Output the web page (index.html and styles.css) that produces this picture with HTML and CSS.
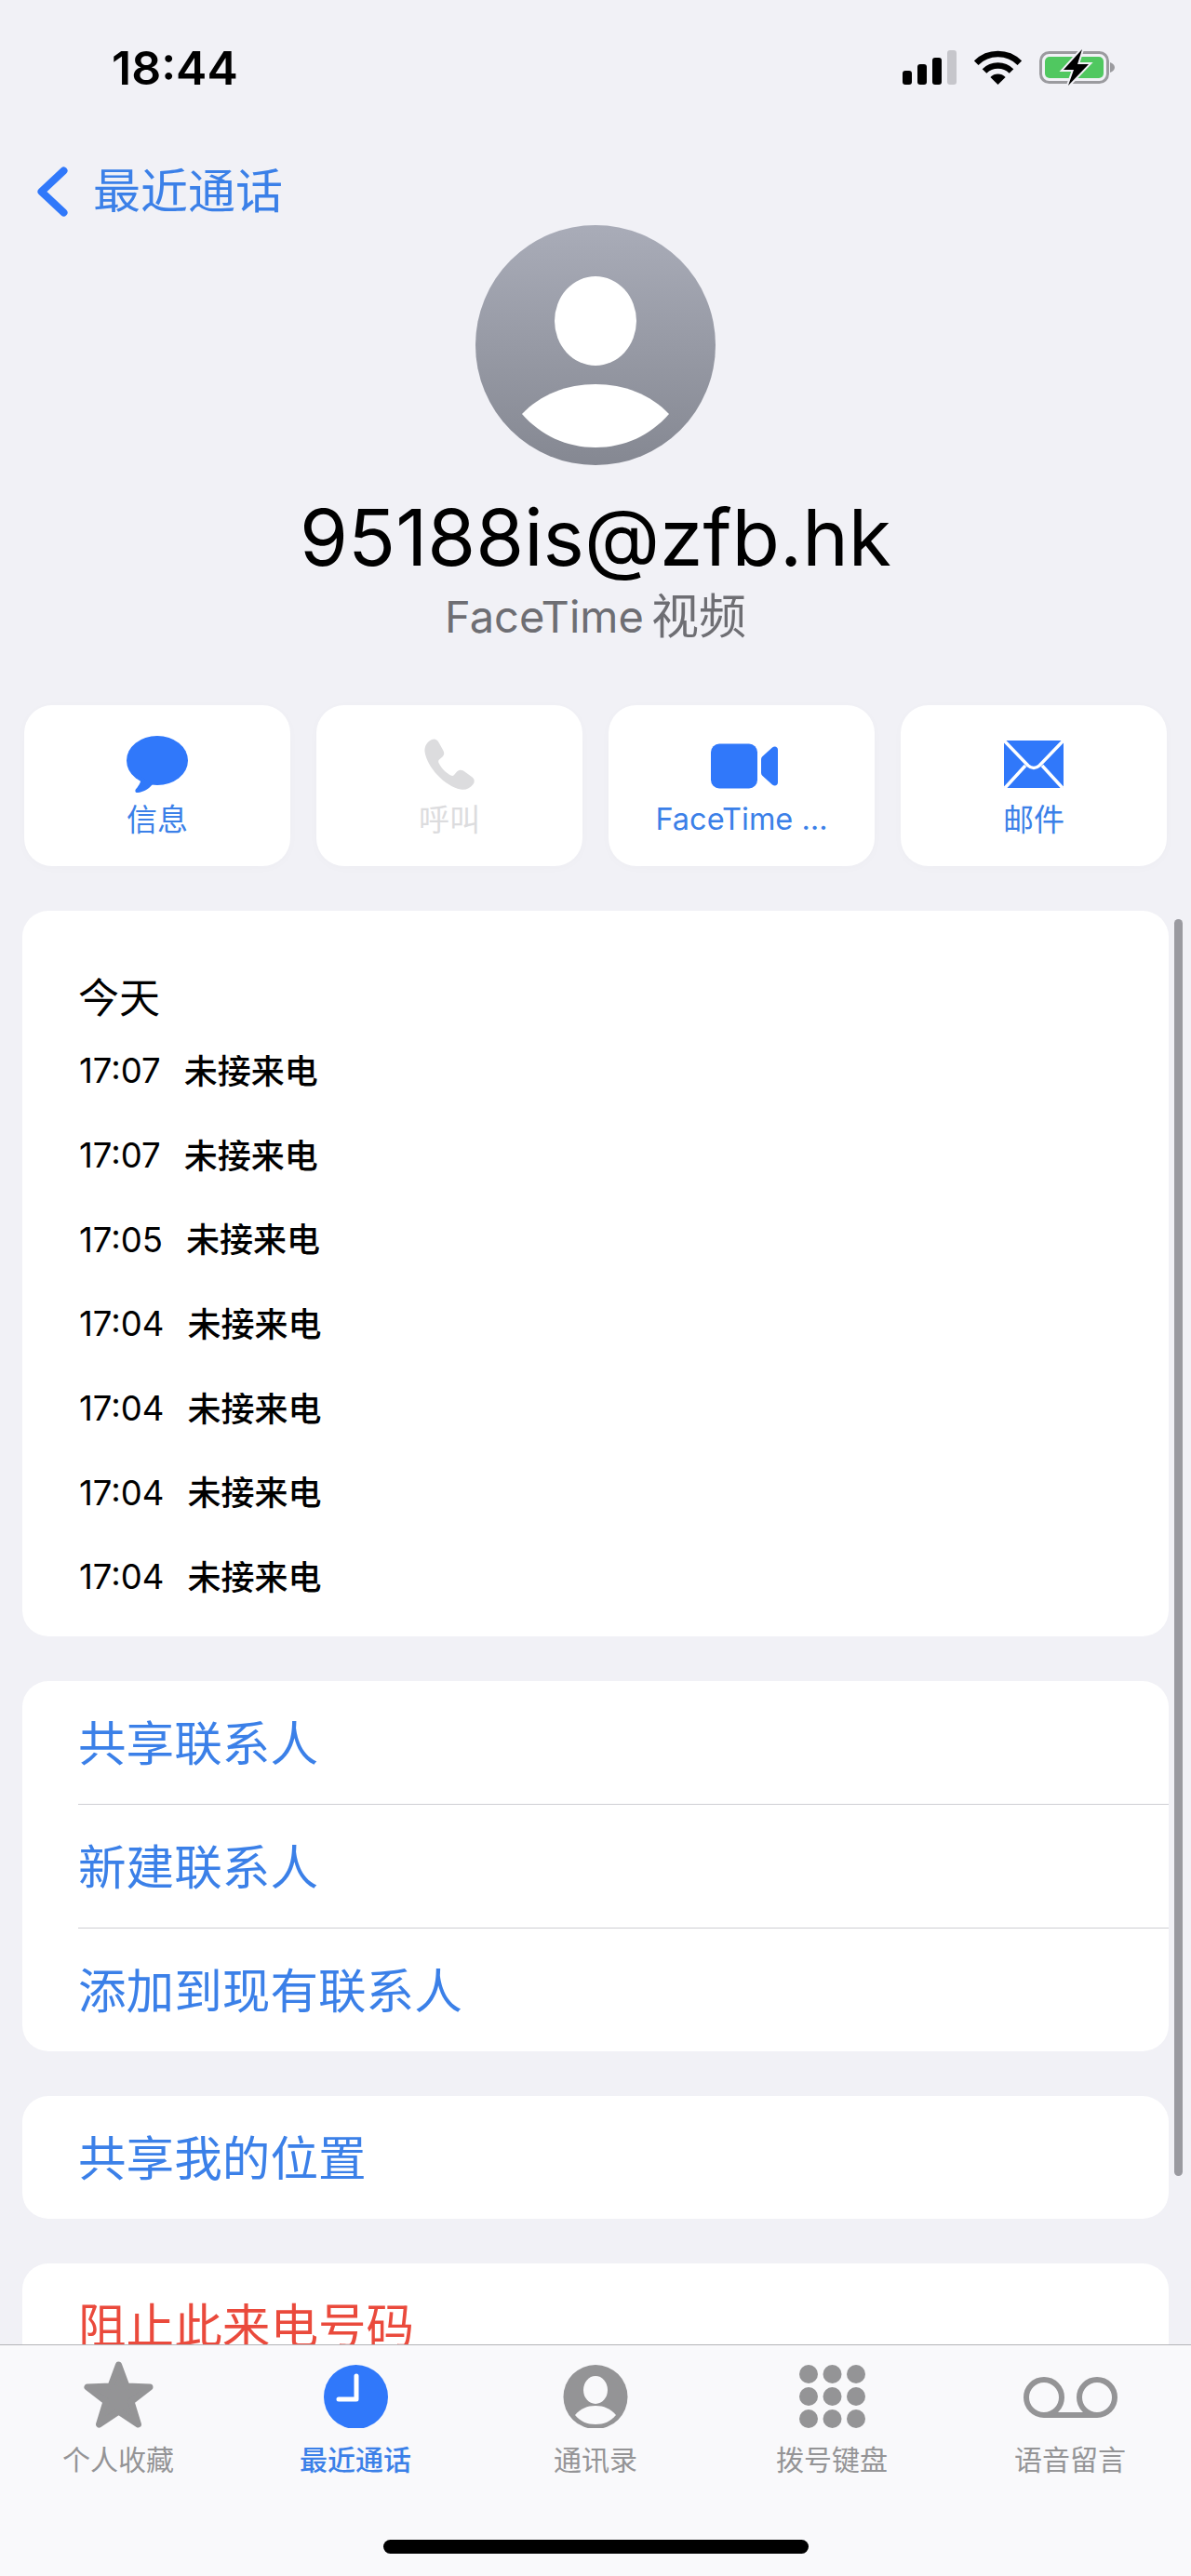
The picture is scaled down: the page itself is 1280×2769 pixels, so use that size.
FILE: index.html
```html
<!DOCTYPE html>
<html lang="zh-CN">
  <head>
    <meta charset="utf-8">
    <title>95188is@zfb.hk</title>
    <link rel="stylesheet" href="styles.css">
  </head>
  <body>
    <div class="screen">

      <div class="status">
        <span class="time">18:44</span>
        <div class="status-icons">
          <svg width="58" height="37" viewBox="0 0 58 37">
            <rect x="0" y="22" width="10" height="15" rx="3" fill="#000"/>
            <rect x="16" y="15" width="10" height="22" rx="3" fill="#000"/>
            <rect x="32" y="8" width="10" height="29" rx="3" fill="#000"/>
            <rect x="48" y="0" width="10" height="37" rx="3" fill="#c6c6cb"/>
          </svg>
          <svg width="51" height="37" viewBox="0 0 51 37">
            <path d="M2.2 13.7 A33 33 0 0 1 48.8 13.7" fill="none" stroke="#000" stroke-width="6.5"/>
            <path d="M11 22.5 A20.5 20.5 0 0 1 40 22.5" fill="none" stroke="#000" stroke-width="6.5"/>
            <path d="M25.5 37 L17.4 28.9 A11.5 11.5 0 0 1 33.6 28.9 Z" fill="#000"/>
          </svg>
          <svg width="81" height="39" viewBox="0 0 81 39">
            <rect x="1.5" y="3.5" width="72" height="32" rx="9" fill="none" stroke="#9b9b9f" stroke-width="3"/>
            <rect x="6" y="8" width="63" height="23" rx="5" fill="#50c860"/>
            <path d="M76 14 C79 15 81 17 81 19.5 C81 22 79 24 76 25 Z" fill="#9b9b9f"/>
            <path d="M46 0 L26 22 L37 22 L31 39 L53 16 L41 16 Z" fill="#000" stroke="#f1f1f6" stroke-width="4" paint-order="stroke"/>
          </svg>
        </div>
      </div>

      <div class="nav">
        <svg width="33" height="54" viewBox="0 0 33 54">
          <path d="M28.5 4.5 L4.5 27 L28.5 49.5" fill="none" stroke="#3078fa" stroke-width="8" stroke-linecap="round" stroke-linejoin="round"/>
        </svg>
        <span class="back">最近通话</span>
      </div>

      <div class="hero">
        <svg width="258" height="258" viewBox="0 0 258 258">
          <defs>
            <linearGradient id="avatar-bg" x1="0" y1="0" x2="0" y2="1">
              <stop offset="0" stop-color="#a9acb8"/>
              <stop offset="1" stop-color="#858892"/>
            </linearGradient>
          </defs>
          <circle cx="129" cy="129" r="129" fill="url(#avatar-bg)"/>
          <ellipse cx="129" cy="103" rx="44" ry="48" fill="#fff"/>
          <path d="M50 203 C70 182 98 171 129 171 C160 171 188 182 208 203 C188 226 160 239 129 239 C98 239 70 226 50 203 Z" fill="#fff"/>
        </svg>
        <div class="name">95188is@zfb.hk</div>
        <div class="kind">FaceTime<span class="kind-cjk">视频</span></div>
      </div>

      <div class="actions">
        <div class="action">
          <svg width="66" height="61" viewBox="0 0 66 61">
            <ellipse cx="33" cy="26.5" rx="33" ry="26.5" fill="#3078fa"/>
            <path d="M16 44 C16 50 12 55 9.5 58 C9 60.5 10 61 12 61 C18 60.5 24 57 28 52 Z" fill="#3078fa"/>
          </svg>
          <span>信息</span>
        </div>
        <div class="action off">
          <svg width="54" height="55" viewBox="0 0 54 55">
            <path d="M8 1 C11 -0.5 14 1 15.5 4 L20.5 13 C22 16 21 18.5 19 20 L16 22.5 C15 23.5 15 25 15.5 26 C19 33 24 37 28.5 39.5 C30 40.3 31 40 32 39 L35 35.5 C37 33.5 39.5 33 42 34.5 L51 41 C54 43 54.5 46.5 52.5 49 C49 53.5 44.5 55.5 39 54.5 C22 51 3 31 0.5 14 C0 8 3 3.5 8 1 Z" fill="#dcdcde"/>
          </svg>
          <span>呼叫</span>
        </div>
        <div class="action">
          <svg class="video" width="72" height="48" viewBox="0 0 72 48">
            <rect x="0" y="0" width="50" height="48" rx="9" fill="#3078fa"/>
            <path d="M54 17 C54 15.5 54.5 14.5 55.5 13.5 L66 4 C68.5 2 72 3 72 6.5 L72 41.5 C72 45 68.5 46 66 44 L55.5 34.5 C54.5 33.5 54 32.5 54 31 Z" fill="#3078fa"/>
          </svg>
          <span class="truncated">FaceTime …</span>
        </div>
        <div class="action">
          <svg width="64" height="51" viewBox="0 0 64 51">
            <rect x="0" y="0" width="64" height="51" rx="3" fill="#3078fa"/>
            <path d="M0 0 L26 27 Q32 32 38 27 L64 0" fill="none" stroke="#fff" stroke-width="3.5"/>
            <path d="M1 51 L23 27 M63 51 L41 27" fill="none" stroke="#fff" stroke-width="3.5"/>
          </svg>
          <span>邮件</span>
        </div>
      </div>

      <div class="section calls">
        <div class="day">今天</div>
        <div class="call"><span class="call-time">17:07</span><span class="call-type">未接来电</span></div>
        <div class="call"><span class="call-time">17:07</span><span class="call-type">未接来电</span></div>
        <div class="call"><span class="call-time">17:05</span><span class="call-type">未接来电</span></div>
        <div class="call"><span class="call-time">17:04</span><span class="call-type">未接来电</span></div>
        <div class="call"><span class="call-time">17:04</span><span class="call-type">未接来电</span></div>
        <div class="call"><span class="call-time">17:04</span><span class="call-type">未接来电</span></div>
        <div class="call"><span class="call-time">17:04</span><span class="call-type">未接来电</span></div>
      </div>

      <div class="section">
        <div class="row">共享联系人</div>
        <div class="row">新建联系人</div>
        <div class="row">添加到现有联系人</div>
      </div>

      <div class="section">
        <div class="row">共享我的位置</div>
      </div>

      <div class="section">
        <div class="row danger">阻止此来电号码</div>
      </div>

      <div class="scrollbar"></div>

      <div class="tabbar">
        <div class="tab">
          <svg width="75" height="72" viewBox="0 0 75 72">
            <path d="M37.5 4 L46 27 L71 28 L51 43.5 L58.5 68 L37.5 54 L16.5 68 L24 43.5 L4 28 L29 27 Z" fill="#949496" stroke="#949496" stroke-width="7" stroke-linejoin="round"/>
          </svg>
          <span>个人收藏</span>
        </div>
        <div class="tab active">
          <svg width="69" height="72" viewBox="0 -4 69 72">
            <circle cx="34.5" cy="34.5" r="34.5" fill="#3078fa"/>
            <path d="M35 12 L35 37 L16 37" fill="none" stroke="#fff" stroke-width="5" stroke-linecap="round" stroke-linejoin="round"/>
          </svg>
          <span>最近通话</span>
        </div>
        <div class="tab">
          <svg width="70" height="72" viewBox="0 -4 70 72">
            <circle cx="35" cy="34.5" r="34.5" fill="#949496"/>
            <ellipse cx="35" cy="27" rx="13" ry="15" fill="#f9f9fb"/>
            <path d="M13 54 C19 47 26 44 35 44 C44 44 51 47 57 54 C51 61 44 64 35 64 C26 64 19 61 13 54 Z" fill="#f9f9fb"/>
          </svg>
          <span>通讯录</span>
        </div>
        <div class="tab">
          <svg width="71" height="72" viewBox="0 -4 71 72" fill="#949496">
            <circle cx="10" cy="10" r="10"/><circle cx="35.5" cy="10" r="10"/><circle cx="61" cy="10" r="10"/>
            <circle cx="10" cy="34" r="10"/><circle cx="35.5" cy="34" r="10"/><circle cx="61" cy="34" r="10"/>
            <circle cx="10" cy="58" r="10"/><circle cx="35.5" cy="58" r="10"/><circle cx="61" cy="58" r="10"/>
          </svg>
          <span>拨号键盘</span>
        </div>
        <div class="tab">
          <svg width="101" height="72" viewBox="0 -3 101 72" fill="none" stroke="#949496" stroke-width="6">
            <circle cx="22" cy="36" r="19"/>
            <circle cx="79" cy="36" r="19"/>
            <path d="M22 55 L79 55"/>
          </svg>
          <span>语音留言</span>
        </div>
        <div class="home-bar"></div>
      </div>

    </div>
  </body>
</html>
```

FILE: styles.css
```css
body {
    margin: 0;
    background: #f1f1f6;
}

svg {
    display: block;
    flex: none;
}

.screen {
    position: relative;
    width: 1280px;
    height: 2769px;
    overflow: hidden;
    background: #f1f1f6;
    font-family: Inter, "Noto Sans CJK SC", sans-serif;
    color: #000;
}

.status {
    height: 146px;
    box-sizing: border-box;
    padding: 53px 82px 0 120px;
    display: flex;
    justify-content: space-between;
    align-items: flex-start;
}

.time {
    font-size: 50px;
    font-weight: 600;
    line-height: 40px;
}

.status-icons {
    display: flex;
    align-items: center;
    gap: 19px;
}

.nav {
    height: 96px;
    box-sizing: border-box;
    padding: 24px 0 0 40px;
    display: flex;
    align-items: center;
    gap: 27px;
}

.back {
    font-size: 51px;
    line-height: 60px;
    color: #3b80e8;
}

.hero {
    display: flex;
    flex-direction: column;
    align-items: center;
}

.name {
    margin-top: 28px;
    font-size: 84px;
    line-height: 100px;
}

.kind {
    display: flex;
    align-items: center;
    gap: 8px;
    font-size: 47px;
    line-height: 70px;
    color: #6e6e73;
}

.kind-cjk {
    font-size: 51px;
}

.actions {
    margin: 60px 26px 0;
    display: grid;
    grid-template-columns: repeat(4, 286px);
    justify-content: space-between;
}

.action {
    height: 173px;
    background: #fff;
    border-radius: 30px;
    box-shadow: 0 2px 12px rgba(0, 0, 0, 0.02);
    display: flex;
    flex-direction: column;
    align-items: center;
    color: #3b80e8;
    font-size: 33px;
    line-height: 40px;
}

.action svg {
    height: 61px;
    margin-top: 33px;
}

.action .video {
    margin-left: 6px;
    transform: translateY(2px);
}

.action span {
    margin-top: 9px;
}

.action .truncated {
    font-size: 32.5px;
}

.action.off {
    color: #dcdcde;
}

.section {
    margin: 48px 24px 0;
    background: #fff;
    border-radius: 28px;
}

.calls {
    height: 780px;
    box-sizing: border-box;
    padding-top: 64px;
}

.day {
    margin-left: 60px;
    font-size: 44px;
    line-height: 60px;
}

.call {
    height: 90.7px;
    margin-left: 61px;
    display: flex;
    align-items: center;
    gap: 25px;
    font-size: 36.5px;
}

.call:nth-child(2) {
    margin-top: 2px;
}

.call-time {
    margin-top: 2px;
}

.call-type {
    font-size: 36px;
    font-weight: 500;
    margin-top: -3px;
}

.row {
    height: 132px;
    margin-left: 60px;
    padding-bottom: 6px;
    display: flex;
    align-items: center;
    font-size: 51.6px;
    color: #3b80e8;
    box-sizing: border-box;
}

.row + .row {
    height: 133px;
    border-top: 1px solid #cfcfd3;
}

.row.danger {
    height: 132px;
    color: #ea4a3c;
}

.scrollbar {
    position: absolute;
    left: 1262px;
    top: 988px;
    width: 9px;
    height: 1351px;
    border-radius: 5px;
    background: #9a9aa0;
}

.tabbar {
    position: absolute;
    left: 0;
    top: 2520px;
    width: 1280px;
    height: 249px;
    box-sizing: border-box;
    border-top: 1px solid #b4b4b8;
    background: #f9f9fb;
    display: grid;
    grid-template-columns: 127px 255px 258px 254px 256px 130px;
}

.tab {
    grid-row: 1;
    width: 0;
    justify-self: end;
    display: flex;
    flex-direction: column;
    align-items: center;
    font-size: 30px;
    line-height: 36px;
    color: #949496;
    white-space: nowrap;
    padding-top: 17px;
}

.tab svg {
    height: 72px;
}

.tab span {
    margin-top: 16px;
}

.tab.active {
    color: #3b80e8;
    font-weight: 500;
}

.home-bar {
    position: absolute;
    left: 412px;
    top: 209px;
    width: 457px;
    height: 15px;
    border-radius: 8px;
    background: #000;
}
```
